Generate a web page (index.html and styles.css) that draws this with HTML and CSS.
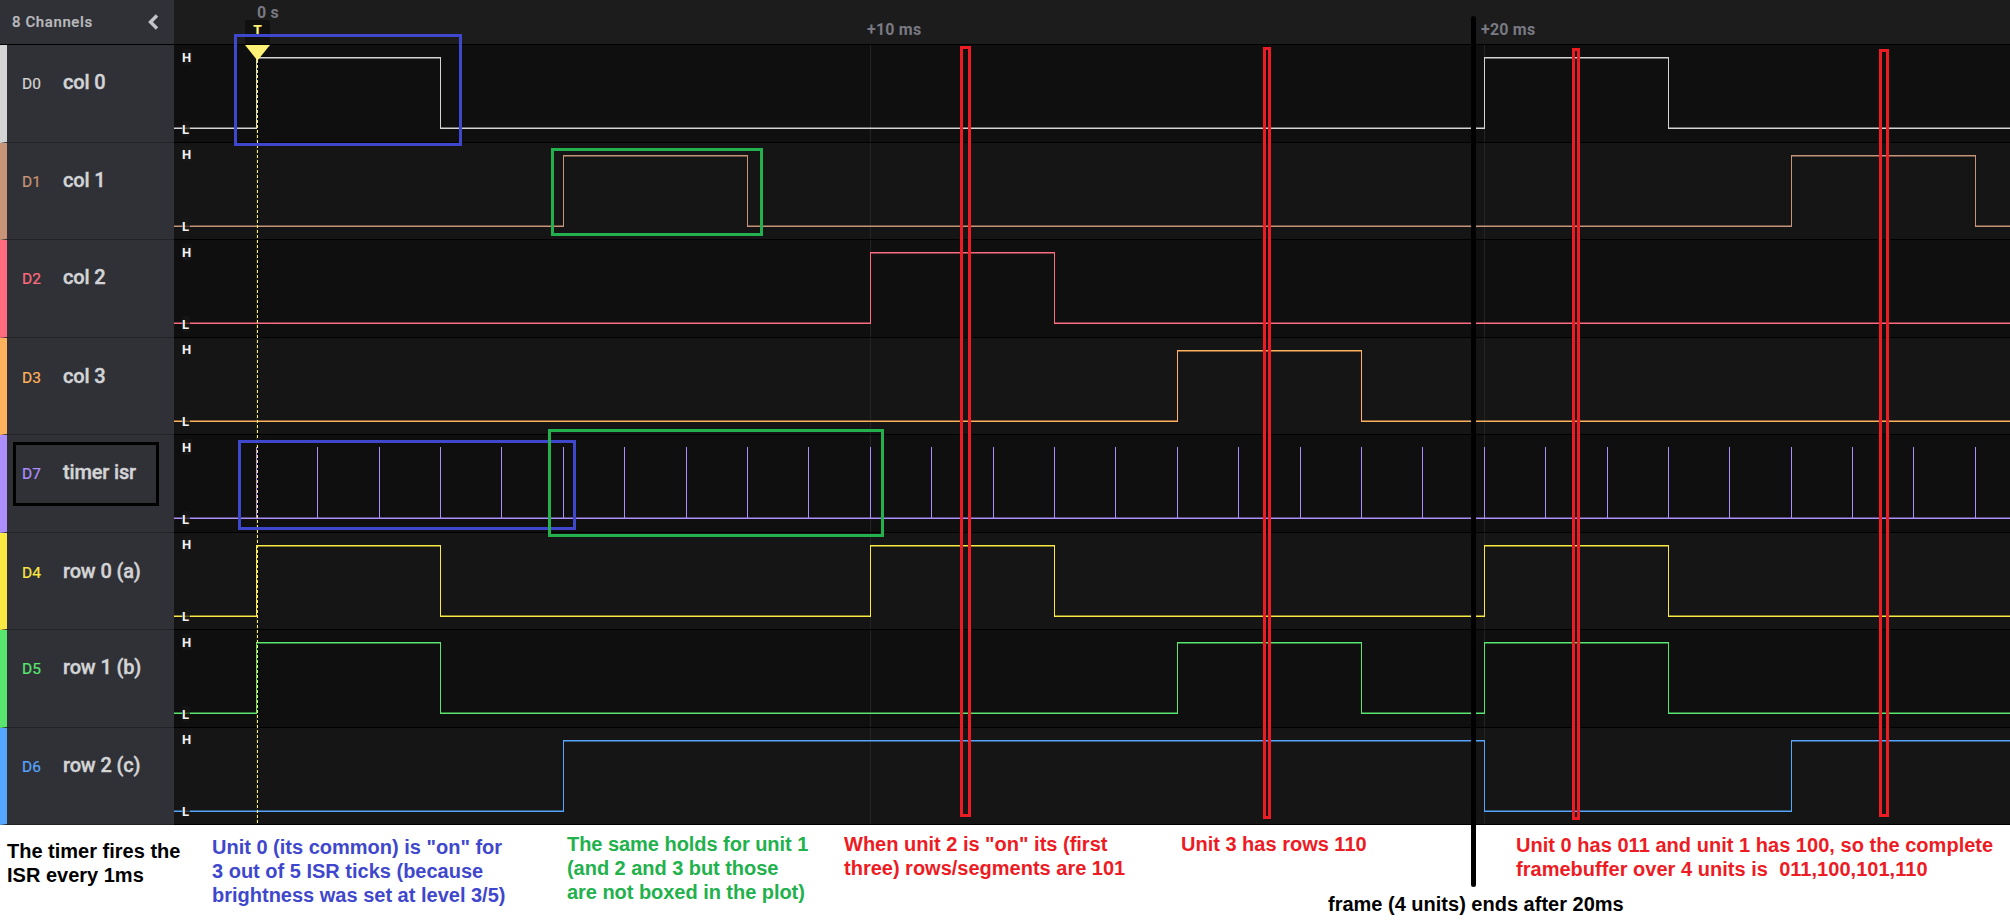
FILE: index.html
```
<!DOCTYPE html>
<html lang="en">
<head>
<meta charset="utf-8">
<title>Logic capture</title>
<link rel="stylesheet" href="styles.css">
</head>
<body>
<main class="capture">
  <header class="topbar">
    <div class="channels-head">
      <span class="channels-count">8 Channels</span>
      <svg class="chevron" width="12" height="18" viewBox="0 0 12 18"><path d="M10 2.5 L3.5 9 L10 15.5"/></svg>
    </div>
    <div class="ruler">
      <span class="mark mark-0">0 s</span>
      <span class="mark mark-10">+10 ms</span>
      <span class="mark mark-20">+20 ms</span>
      <span class="trigger">T</span>
    </div>
  </header>

  <section class="channels">
    <div class="channel c0">
      <div class="label"><span class="id">D0</span><span class="name">col 0</span></div>
      <div class="plot">
        <svg class="wave" viewBox="174 0 1836 97" width="1836" height="97">
          <path class="dim" d="M174 82.5H257M256 13.5H441M440 82.5H1485M1484 13.5H1669M1668 82.5H2010"/>
          <path class="lit" d="M174 83.5H256.5V12.5H440.5V83.5H1484.5V12.5H1668.5V83.5H2010"/>
        </svg>
        <b class="lv hi">H</b><b class="lv lo">L</b>
      </div>
    </div>
    <div class="channel c1">
      <div class="label"><span class="id">D1</span><span class="name">col 1</span></div>
      <div class="plot">
        <svg class="wave" viewBox="174 0 1836 97" width="1836" height="97">
          <path class="dim" d="M174 82.5H564M563 13.5H748M747 82.5H1792M1791 13.5H1976M1975 82.5H2010"/>
          <path class="lit" d="M174 83.5H563.5V12.5H747.5V83.5H1791.5V12.5H1975.5V83.5H2010"/>
        </svg>
        <b class="lv hi">H</b><b class="lv lo">L</b>
      </div>
    </div>
    <div class="channel c2">
      <div class="label"><span class="id">D2</span><span class="name">col 2</span></div>
      <div class="plot">
        <svg class="wave" viewBox="174 0 1836 97" width="1836" height="97">
          <path class="dim" d="M174 82.5H871M870 13.5H1055M1054 82.5H2010"/>
          <path class="lit" d="M174 83.5H870.5V12.5H1054.5V83.5H2010"/>
        </svg>
        <b class="lv hi">H</b><b class="lv lo">L</b>
      </div>
    </div>
    <div class="channel c3">
      <div class="label"><span class="id">D3</span><span class="name">col 3</span></div>
      <div class="plot">
        <svg class="wave" viewBox="174 0 1836 97" width="1836" height="97">
          <path class="dim" d="M174 82.5H1178M1177 13.5H1362M1361 82.5H2010"/>
          <path class="lit" d="M174 83.5H1177.5V12.5H1361.5V83.5H2010"/>
        </svg>
        <b class="lv hi">H</b><b class="lv lo">L</b>
      </div>
    </div>
    <div class="channel c7">
      <div class="label"><span class="id">D7</span><span class="name">timer isr</span></div>
      <div class="plot">
        <svg class="wave" viewBox="174 0 1836 97" width="1836" height="97">
          <path class="dim" d="M174 82.5H2010"/>
          <path class="lit" d="M174 83.5H2010M256.5 12V83M317.5 12V83M379.5 12V83M440.5 12V83M501.5 12V83M563.5 12V83M624.5 12V83M686.5 12V83M747.5 12V83M808.5 12V83M870.5 12V83M931.5 12V83M993.5 12V83M1054.5 12V83M1115.5 12V83M1177.5 12V83M1238.5 12V83M1300.5 12V83M1361.5 12V83M1422.5 12V83M1484.5 12V83M1545.5 12V83M1607.5 12V83M1668.5 12V83M1729.5 12V83M1791.5 12V83M1852.5 12V83M1913.5 12V83M1975.5 12V83"/>
        </svg>
        <b class="lv hi">H</b><b class="lv lo">L</b>
      </div>
    </div>
    <div class="channel c4">
      <div class="label"><span class="id">D4</span><span class="name">row 0 (a)</span></div>
      <div class="plot">
        <svg class="wave" viewBox="174 0 1836 97" width="1836" height="97">
          <path class="dim" d="M174 82.5H257M256 13.5H441M440 82.5H871M870 13.5H1055M1054 82.5H1485M1484 13.5H1669M1668 82.5H2010"/>
          <path class="lit" d="M174 83.5H256.5V12.5H440.5V83.5H870.5V12.5H1054.5V83.5H1484.5V12.5H1668.5V83.5H2010"/>
        </svg>
        <b class="lv hi">H</b><b class="lv lo">L</b>
      </div>
    </div>
    <div class="channel c5">
      <div class="label"><span class="id">D5</span><span class="name">row 1 (b)</span></div>
      <div class="plot">
        <svg class="wave" viewBox="174 0 1836 97" width="1836" height="97">
          <path class="dim" d="M174 82.5H257M256 13.5H441M440 82.5H1178M1177 13.5H1362M1361 82.5H1485M1484 13.5H1669M1668 82.5H2010"/>
          <path class="lit" d="M174 83.5H256.5V12.5H440.5V83.5H1177.5V12.5H1361.5V83.5H1484.5V12.5H1668.5V83.5H2010"/>
        </svg>
        <b class="lv hi">H</b><b class="lv lo">L</b>
      </div>
    </div>
    <div class="channel c6">
      <div class="label"><span class="id">D6</span><span class="name">row 2 (c)</span></div>
      <div class="plot">
        <svg class="wave" viewBox="174 0 1836 97" width="1836" height="97">
          <path class="dim" d="M174 82.5H564M563 13.5H1485M1484 82.5H1792M1791 13.5H2010"/>
          <path class="lit" d="M174 83.5H563.5V12.5H1484.5V83.5H1791.5V12.5H2010"/>
        </svg>
        <b class="lv hi">H</b><b class="lv lo">L</b>
      </div>
    </div>
  </section>

  <section class="captions">
    <p class="cap cap-timer">The timer fires the<br>ISR every 1ms</p>
    <p class="cap cap-unit0">Unit 0 (its common) is "on" for<br>3 out of 5 ISR ticks (because<br>brightness was set at level 3/5)</p>
    <p class="cap cap-unit1">The same holds for unit 1<br>(and 2 and 3 but those<br>are not boxed in the plot)</p>
    <p class="cap cap-unit2">When unit 2 is "on" its (first<br>three) rows/segments are 101</p>
    <p class="cap cap-unit3">Unit 3 has rows 110</p>
    <p class="cap cap-total">Unit 0 has 011 and unit 1 has 100, so the complete<br>framebuffer over 4 units is&nbsp; 011,100,101,110</p>
    <p class="cap cap-frame">frame (4 units) ends after 20ms</p>
  </section>

  <svg class="overlay" width="2010" height="923" viewBox="0 0 2010 923">
    <path class="cursor" d="M257.5 60V825"/>
    <path class="flag" d="M245 45H270L257.5 60.5Z"/>
    <g class="box">
      <rect class="blue" x="235.5" y="35.5" width="225" height="109"/>
      <rect class="blue" x="239.5" y="441.5" width="335" height="87"/>
      <rect class="green" x="552.5" y="149.5" width="209" height="85"/>
      <rect class="green" x="549.5" y="430.5" width="333" height="105"/>
      <rect class="black" x="14.5" y="443.5" width="143" height="61"/>
      <rect class="red" x="961.5" y="47.5" width="8" height="768"/>
      <rect class="red" x="1264.5" y="48.5" width="5" height="769"/>
      <rect class="red" x="1573.5" y="49.5" width="5" height="769"/>
      <rect class="red" x="1880.5" y="50.5" width="7" height="765"/>
    </g>
    <path class="frame-end" d="M1473.5 18.5V884.5"/>
  </svg>
</main>
</body>
</html>
```
FILE: styles.css
```
body {
  margin: 0;
  background: #fff;
  font-family: Roboto, "Liberation Sans", sans-serif;
}

.capture {
  position: relative;
  width: 2010px;
  height: 923px;
  overflow: hidden;
  display: flex;
  flex-direction: column;
}

.topbar {
  display: flex;
  height: 44px;
  border-bottom: 1px solid #000;
}

.channels-head {
  box-sizing: border-box;
  width: 174px;
  display: flex;
  align-items: center;
  justify-content: space-between;
  padding: 0 15px 0 12px;
  background: #303136;
  color: #b9babd;
}

.channels-count {
  font-size: 15px;
  font-weight: 500;
  letter-spacing: 0.6px;
  -webkit-text-stroke: 0.2px currentColor;
}

.chevron path {
  fill: none;
  stroke: #c3c4c7;
  stroke-width: 3.4;
}

.ruler {
  position: relative;
  flex: 1;
  background: #1c1c1c;
}

.mark {
  position: absolute;
  font-size: 16px;
  line-height: 20px;
  font-weight: 700;
  letter-spacing: 0.2px;
  color: #797983;
}

.mark-0 { left: 83px; top: 3px; }
.mark-10 { left: 693px; top: 20px; }
.mark-20 { left: 1307px; top: 20px; }

.trigger {
  position: absolute;
  left: 71px;
  top: 20px;
  width: 25px;
  height: 24px;
  border-radius: 3px 3px 0 0;
  background: #101010;
  color: #fff176;
  font: 700 15px/23px "Liberation Mono", monospace;
  text-align: center;
}

.channels {
  display: flex;
  flex-direction: column;
}

.channel {
  display: flex;
  height: 97px;
  border-bottom: 1px solid #000;
}

.channel:nth-child(even) { height: 96px; }

.label {
  box-sizing: border-box;
  width: 174px;
  display: flex;
  align-items: baseline;
  border-left: 7px solid var(--tone);
  background: #303136;
  padding: 25px 0 0 15px;
  margin-bottom: -1px;
  border-bottom: 1px solid #222327;
}

.c3 .label,
.c4 .label { padding-top: 26px; }

.id {
  width: 41px;
  font-size: 15.5px;
  line-height: 24px;
  color: var(--tone);
  -webkit-text-stroke: 0.2px currentColor;
}

.name {
  font-size: 20px;
  line-height: 24px;
  font-weight: 500;
  letter-spacing: -0.15px;
  color: #d3d4d6;
  -webkit-text-stroke: 0.4px currentColor;
}

.plot {
  position: relative;
  flex: 1;
  overflow: hidden;
  background:
    linear-gradient(#242424, #242424) 82px 0 / 1px 100% no-repeat,
    linear-gradient(#242424, #242424) 696px 0 / 1px 100% no-repeat,
    linear-gradient(#242424, #242424) 1310px 0 / 1px 100% no-repeat,
    #0f0f0f;
}

.channel:nth-child(even) .plot { background-color: #151515; }

.wave {
  display: block;
  shape-rendering: crispEdges;
}

.wave path {
  fill: none;
  stroke: var(--tone);
  stroke-width: 1;
}

.wave .dim { stroke-opacity: 0.5; }

.c0 { --tone: #d4d4d4; }
.c1 { --tone: #c79479; }
.c2 { --tone: #ff6b7f; }
.c3 { --tone: #ffb15b; }
.c7 { --tone: #ad8ffc; }
.c4 { --tone: #fae843; }
.c5 { --tone: #58e66f; }
.c6 { --tone: #55a6ff; }

.lv {
  position: absolute;
  left: 8px;
  height: 16px;
  padding-right: 1px;
  border-radius: 3px;
  background: rgba(24, 24, 24, 0.7);
  color: #f2f2f2;
  font-size: 13px;
  line-height: 18px;
  font-weight: 700;
}

.hi { top: 4px; }
.lo { top: 76px; }
.channel:nth-child(even) .hi { top: 3px; }
.channel:nth-child(even) .lo { top: 75px; }

.captions {
  display: grid;
  grid-template-columns: 205px 355px 277px 337px 335px 1fr;
  grid-template-rows: 98px;
  padding-left: 7px;
  font: 700 20px/24px "Liberation Sans", Arial, sans-serif;
}

.cap {
  margin: 7px 0 0;
  white-space: nowrap;
  grid-row: 1;
}

.cap-timer { grid-column: 1; margin-top: 14px; color: #000; }
.cap-unit0 { grid-column: 2; margin-top: 10px; color: #3f48cc; }
.cap-unit1 { grid-column: 3; color: #22b14c; letter-spacing: -0.04px; }
.cap-unit2 { grid-column: 4; color: #ed1c24; }
.cap-unit3 { grid-column: 5; color: #ed1c24; }
.cap-total { grid-column: 6; margin-top: 8px; color: #ed1c24; letter-spacing: 0.03px; }
.cap-frame { grid-column: 5 / 7; align-self: end; padding: 0 0 7px 147px; color: #000; }

.overlay {
  position: absolute;
  left: 0;
  top: 0;
  pointer-events: none;
}

.cursor {
  stroke: #fff176;
  stroke-width: 1;
  stroke-dasharray: 3 2;
}

.flag { fill: #fff176; }

.box rect {
  fill: none;
  stroke-width: 3;
}

.box .blue { stroke: #3f48cc; }
.box .green { stroke: #22b14c; }
.box .black { stroke: #000; }
.box .red { stroke: #ed1c24; }

.frame-end {
  stroke: #000;
  stroke-width: 5;
  stroke-linecap: round;
}
```
